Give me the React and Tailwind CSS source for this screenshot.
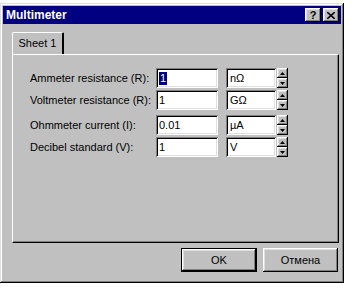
import React from "react";

const raised =
  "shadow-[inset_-1px_-1px_#000,inset_1px_1px_#fff,inset_-2px_-2px_#808080,inset_2px_2px_#dfdfdf]";
const sunken =
  "shadow-[inset_1px_1px_#808080,inset_-1px_-1px_#fff,inset_2px_2px_#000,inset_-2px_-2px_#dfdfdf]";

function TitleButton({ children }) {
  return (
    <div className={`w-[16px] h-[14px] bg-[#c0c0c0] flex items-center justify-center ${raised}`}>
      {children}
    </div>
  );
}

function Spinner() {
  return (
    <div className="flex flex-col w-[11px] h-[20px] ml-[1px]">
      <div className={`flex-1 bg-[#c0c0c0] flex items-center justify-center ${raised}`}>
        <svg width="5" height="3" viewBox="0 0 5 3">
          <path d="M2.5 0 L5 3 L0 3 Z" fill="#000" />
        </svg>
      </div>
      <div className={`flex-1 bg-[#c0c0c0] flex items-center justify-center ${raised}`}>
        <svg width="5" height="3" viewBox="0 0 5 3">
          <path d="M0 0 L5 0 L2.5 3 Z" fill="#000" />
        </svg>
      </div>
    </div>
  );
}

function Row({ label, value, unit, selected, className }) {
  return (
    <div className={`flex items-center h-[20px] ${className}`}>
      <div className="w-[143px] pl-[17px] whitespace-nowrap text-black">{label}</div>
      <div className={`w-[62px] h-[20px] bg-white flex items-center px-[3px] ${sunken}`}>
        {selected ? (
          <span className="bg-[#000080] text-white leading-[13px] px-[1px]">{value}</span>
        ) : (
          <span>{value}</span>
        )}
      </div>
      <div className="flex ml-[8px]">
        <div className={`w-[50px] h-[20px] bg-white flex items-center px-[4px] ${sunken}`}>
          {unit}
        </div>
        <Spinner />
      </div>
    </div>
  );
}

export default function App() {
  return (
    <div
      className="w-[353px] h-[288px] bg-white pt-[3px] text-[11px] text-black"
      style={{ fontFamily: '"Liberation Sans", Arial, sans-serif' }}
    >
      <div
        className={`w-[344px] h-[280px] bg-[#c0c0c0] p-[3px] flex flex-col shadow-[inset_-1px_-1px_#000,inset_1px_1px_#dfdfdf,inset_-2px_-2px_#808080,inset_2px_2px_#fff]`}
      >
        {/* title bar */}
        <div className="h-[18px] bg-[#000080] flex items-center pl-[3px] pr-[2px]">
          <span className="text-white font-bold text-[12px] flex-1">Multimeter</span>
          <TitleButton>
            <span className="font-bold text-[11px] leading-none">?</span>
          </TitleButton>
          <div className="ml-[2px]">
            <TitleButton>
              <svg width="8" height="7" viewBox="0 0 8 7">
                <path d="M0 0 L8 7 M8 0 L0 7" stroke="#000" strokeWidth="1.6" />
              </svg>
            </TitleButton>
          </div>
        </div>

        {/* tabs */}
        <div className="ml-[9px] mt-[8px] w-[327px]">
          <div className="flex h-[22px]">
            <div className="relative w-[52px] h-[22px] bg-[#c0c0c0] border-l border-t border-white border-r-2 border-r-[#000] rounded-t-[2px] flex items-center justify-center z-10 -mb-[1px]">
              Sheet 1
            </div>
          </div>
          <div className="h-[189px] border-t border-l border-white border-r border-b border-r-[#000] border-b-[#000] shadow-[inset_-1px_-1px_#808080]">
            <Row label="Ammeter resistance (R):" value="1" unit="nΩ" selected className="mt-[13px]" />
            <Row label="Voltmeter resistance (R):" value="1" unit="GΩ" className="mt-[2px]" />
            <Row label="Ohmmeter current (I):" value="0.01" unit="µA" className="mt-[5px]" />
            <Row label="Decibel standard (V):" value="1" unit="V" className="mt-[2px]" />
          </div>
        </div>

        {/* buttons */}
        <div className="flex justify-end gap-[6px] mt-[5px] pr-[3px]">
          <div className="w-[76px] h-[24px] border border-black">
            <div className={`w-full h-full flex items-center justify-center ${raised}`}>OK</div>
          </div>
          <div className={`w-[75px] h-[24px] flex items-center justify-center ${raised}`}>Отмена</div>
        </div>
      </div>
    </div>
  );
}
